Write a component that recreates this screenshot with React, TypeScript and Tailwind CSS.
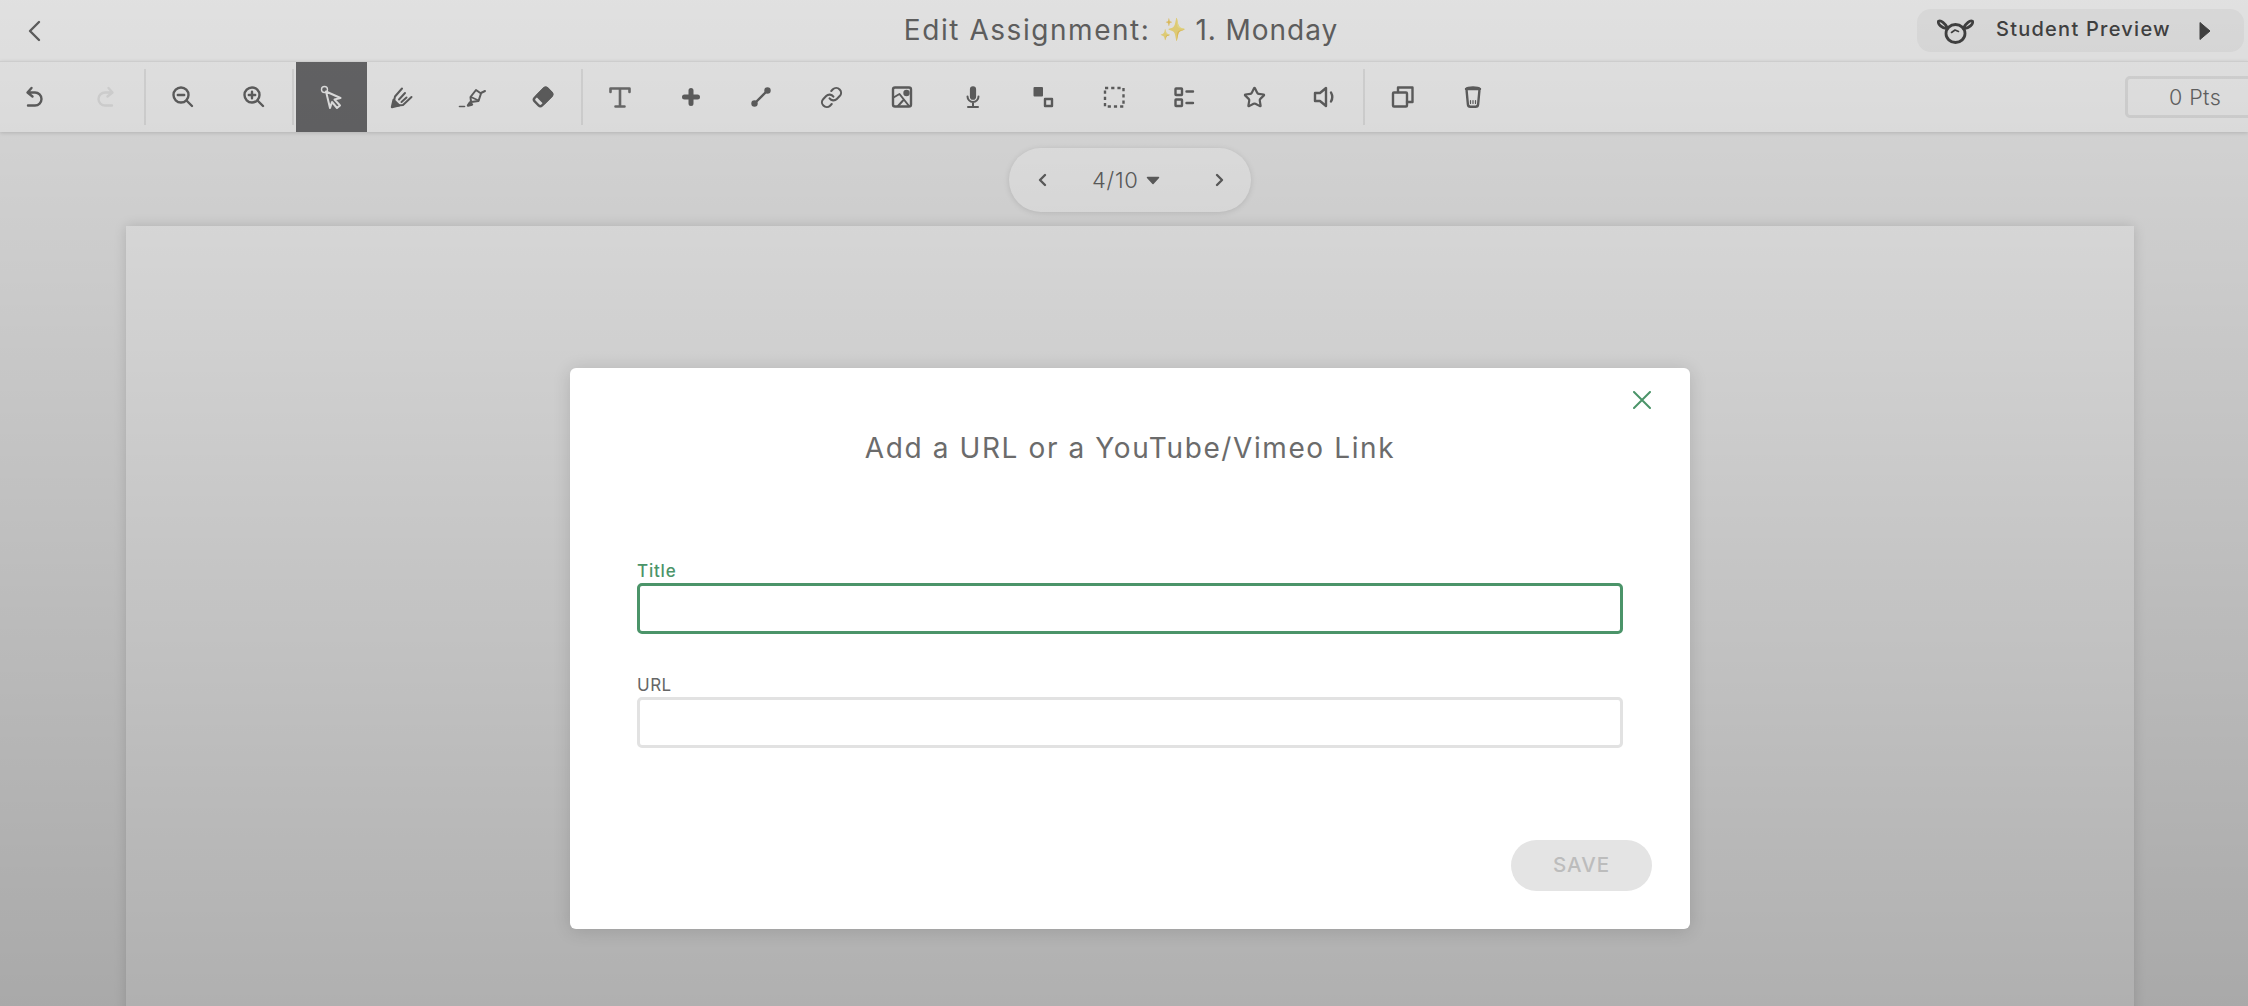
import React from 'react';
import { Link as LinkIcon, Star } from 'lucide-react';

const font = "font-['Inter','Noto_Sans',sans-serif]";

const Ico: React.FC<{ children: React.ReactNode; className?: string }> = ({ children, className = 'text-[#686868]' }) => (
  <svg width="32" height="32" viewBox="0 0 32 32" fill="none" stroke="currentColor" strokeWidth="2.4" strokeLinecap="round" strokeLinejoin="round" className={className}>
    {children}
  </svg>
);

const Tool: React.FC<{ children: React.ReactNode; active?: boolean }> = ({ children, active }) => (
  <button className={`flex h-[70px] w-[70.5px] shrink-0 items-center justify-center ${active ? 'bg-[#6f6f71]' : ''}`}>{children}</button>
);

const Divider = () => <div className="mx-[2.5px] h-[56px] w-[2px] shrink-0 bg-[#ececec]" />;

export default function App() {
  return (
    <div className={`relative h-screen w-full overflow-hidden bg-[#f5f5f5] ${font}`}>
      {/* --- HEADER --- */}
      <header className="grid h-[61px] grid-cols-[1fr_auto_1fr] items-center bg-white pr-[4px]">
        <button className="pl-[27px]">
          <svg width="14" height="22" viewBox="0 0 14 22" fill="none" stroke="#686868" strokeWidth="2.4" strokeLinecap="round" strokeLinejoin="round">
            <path d="M12 2 3 11l9 9" />
          </svg>
        </button>
        <h1 className="mb-[2px] mr-[2px] flex items-center text-[28px] font-normal text-[#6a6a6a]">
          <span className="tracking-[1.55px]">Edit Assignment:</span>
          <span className="mx-[9px] text-[22px] opacity-60">✨</span>
          <span className="tracking-[0.95px]">1. Monday</span>
        </h1>
        <div className="flex justify-end">
          <button className="flex h-[43px] w-[327px] items-center rounded-[14px] bg-[#f5f5f5] pl-[20px] text-[#484848]">
            <svg width="37" height="26" viewBox="0 0 37 26" fill="none" stroke="currentColor" strokeWidth="2.8" strokeLinecap="round" strokeLinejoin="round">
              <ellipse cx="18.5" cy="15.5" rx="9.5" ry="9" />
              <path d="M10.5 10C8 5 4 2 1.5 3.2 0.5 6 5 10.5 10 10.5" />
              <path d="M26.5 10C29 5 33 2 35.5 3.2 36.5 6 32 10.5 27 10.5" />
              <path d="M14.5 14.5 18 12l3.5 1.5" strokeWidth="1.6" />
            </svg>
            <span className="mb-[3px] ml-[22px] text-[20px] font-medium tracking-[1.25px]">Student Preview</span>
            <svg width="12" height="20" viewBox="0 0 12 20" className="ml-[28px]" fill="currentColor" stroke="currentColor" strokeWidth="1" strokeLinejoin="round">
              <path d="M1 1.5 11 10 1 18.5Z" />
            </svg>
          </button>
        </div>
      </header>

      {/* --- TOOLBAR --- */}
      <div className="relative z-10 flex h-[71px] items-center border-t-[1px] border-[#ececec] bg-white shadow-[0_1px_4px_rgba(0,0,0,0.15)]">
        <Tool>
          <Ico><path d="M12.5 7 8.5 11.5l5 4M9 11.5h7a6.5 6.5 0 0 1 0 13H9" /></Ico>
        </Tool>
        <Tool>
          <Ico className="text-[#ececec]"><path d="M18.5 7l4 4.5-5 4M22 11.5h-7a6.5 6.5 0 0 0 0 13h7" /></Ico>
        </Tool>
        <Divider />
        <Tool>
          <Ico><circle cx="14" cy="14" r="7.5" /><path d="m19.5 19.5 5.5 5.5M10.8 14h6.4" /></Ico>
        </Tool>
        <Tool>
          <Ico><circle cx="14" cy="14" r="7.5" /><path d="m19.5 19.5 5.5 5.5M10.8 14h6.4M14 10.8v6.4" /></Ico>
        </Tool>
        <Divider />
        <Tool active>
          <Ico className="text-[#fbfbfb]">
            <circle cx="9.5" cy="8.5" r="3" strokeWidth="1.4" />
            <path d="M11 10.5 25.5 17l-6 1.5 5.5 6-3 2.5-5-6-2 6Z" strokeWidth="2" />
          </Ico>
        </Tool>
        <Tool>
          <Ico>
            <path d="M7 25 9 15.5l7-8M7 25 17 24l8.5-8M13 18.5 19 12M15.5 21l5-4.5" strokeWidth="2" />
            <path d="M6 26l1.6-7 5.4 5.4Z" fill="currentColor" />
          </Ico>
        </Tool>
        <Tool>
          <Ico>
            <path d="M3.5 25.5h5" strokeWidth="1.6" />
            <path d="M12 24.5l2-3 2 2Z" fill="currentColor" />
            <path d="M15 21l-.5-5 5.5-7 5 3.5-2.5 7.5ZM25 12l4-2" strokeWidth="2" />
            <path d="M15 16l7.5 3.5" strokeWidth="1.6" />
          </Ico>
        </Tool>
        <Tool>
          <Ico>
            <g transform="rotate(-45 16 16)">
              <rect x="7" y="10.75" width="18" height="10.5" rx="2.5" fill="#fff" />
              <path d="M12.5 10.75H22.5a2.5 2.5 0 0 1 2.5 2.5v5.5a2.5 2.5 0 0 1-2.5 2.5H12.5Z" fill="currentColor" />
            </g>
          </Ico>
        </Tool>
        <Divider />
        <Tool>
          <Ico className="text-[#777]"><path d="M6.5 11V7.5h19V11M16 7.5v18M11.5 25.5h9" strokeWidth="2.6" /></Ico>
        </Tool>
        <Tool>
          <Ico><path d="M16 9.5v13M9.5 16h13" strokeWidth="5" /></Ico>
        </Tool>
        <Tool>
          <Ico>
            <path d="M9.5 22.5 22.5 9.5" />
            <circle cx="9.5" cy="22.5" r="3.2" fill="currentColor" stroke="none" />
            <circle cx="22.5" cy="9.5" r="3.2" fill="currentColor" stroke="none" />
          </Ico>
        </Tool>
        <Tool>
          <LinkIcon size={23} strokeWidth={2.2} className="text-[#686868]" />
        </Tool>
        <Tool>
          <Ico>
            <rect x="7" y="6.5" width="18" height="19" rx="2" />
            <circle cx="20.5" cy="12" r="3.2" fill="currentColor" stroke="none" />
            <path d="M7.5 16.5 13.5 13l9.5 12M12 25l5-5.5" strokeWidth="2" />
          </Ico>
        </Tool>
        <Tool>
          <Ico>
            <rect x="13.7" y="6" width="4.6" height="12" rx="2.3" fill="currentColor" strokeWidth="1.6" />
            <path d="M10.5 15.5a5.5 5.5 0 0 0 11 0M16 21v4.5M11 26h10" strokeWidth="2" />
          </Ico>
        </Tool>
        <Tool>
          <Ico>
            <rect x="6.5" y="6" width="9.5" height="9.5" rx="1" fill="currentColor" stroke="none" />
            <rect x="18" y="18" width="7" height="7" strokeWidth="2.4" />
          </Ico>
        </Tool>
        <Tool>
          <Ico><rect x="7" y="7" width="18.5" height="18.5" strokeDasharray="3.2 3" strokeLinecap="butt" /></Ico>
        </Tool>
        <Tool>
          <Ico>
            <rect x="7.5" y="7.5" width="6.5" height="6.5" rx="0.5" />
            <rect x="7.5" y="18.5" width="6.5" height="6.5" rx="0.5" />
            <path d="M18.5 10.5h6.5M18.5 22h6.5" />
          </Ico>
        </Tool>
        <Tool>
          <Star size={23} strokeWidth={2.3} className="text-[#686868]" />
        </Tool>
        <Tool>
          <Ico>
            <path d="M6 12h5l6-5v18l-6-5H6Z" />
            <path d="M22 11.5c1.6 2.8 1.6 6.2 0 9" />
          </Ico>
        </Tool>
        <Divider />
        <Tool>
          <Ico>
            <rect x="6" y="11.5" width="14" height="14" rx="1" />
            <path d="M11 11V6.5h14.5V21H20" />
          </Ico>
        </Tool>
        <Tool>
          <Ico>
            <path d="M9 8c2-2 12-2 14 0M9 8h14M9.5 8.5l1.4 15a2.5 2.5 0 0 0 2.5 2.2h5.2a2.5 2.5 0 0 0 2.5-2.2l1.4-15" />
            <path d="M13.5 19.5v3M16 19.5v3M18.5 19.5v3" strokeWidth="1.2" />
          </Ico>
        </Tool>
        <div className="ml-auto -mr-[10px] flex h-[42px] w-[133px] shrink-0 items-center rounded-[5px] border-[3px] border-[#ececec] pl-[41px] text-[21.5px] font-light tracking-[0.4px] text-[#6d6d6d]">
          0 Pts
        </div>
      </div>

      {/* --- WORKSPACE --- */}
      <main className="flex flex-col items-center pl-[12px]">
        <div className="mt-[16px] flex h-[64px] w-[242px] items-center rounded-full bg-white pl-[28px] text-[#686868] shadow-[0_1px_6px_rgba(0,0,0,0.12)]">
          <svg width="10" height="14" viewBox="0 0 10 14" fill="none" stroke="currentColor" strokeWidth="2.4" strokeLinecap="round" strokeLinejoin="round">
            <path d="M8 2 3 7l5 5" />
          </svg>
          <span className="ml-[45px] text-[22px] font-light tracking-[0.7px]">4/10</span>
          <svg width="14" height="9" viewBox="0 0 14 9" className="ml-[7px]" fill="currentColor" stroke="currentColor" strokeWidth="1.5" strokeLinejoin="round">
            <path d="M1.5 1.5h11L7 7.5Z" />
          </svg>
          <svg width="10" height="14" viewBox="0 0 10 14" className="ml-[55px]" fill="none" stroke="currentColor" strokeWidth="2.4" strokeLinecap="round" strokeLinejoin="round">
            <path d="M2 2l5 5-5 5" />
          </svg>
        </div>
        <div className="mt-[14px] h-[900px] w-[2008px] bg-white shadow-[0_0_12px_rgba(0,0,0,0.14)]" />
      </main>

      {/* --- MODAL --- */}
      <div className="absolute inset-0 z-20 flex justify-center bg-gradient-to-b from-black/[.12] to-black/[.31] pl-[12px] pt-[368px]">
        <div className="relative flex h-[561px] w-[1120px] flex-col rounded-[6px] bg-white shadow-[0_2px_18px_rgba(0,0,0,0.14)]">
          <button className="absolute right-[39px] top-[23px] text-[#4b9469]">
            <svg width="18" height="18" viewBox="0 0 18 18" fill="none" stroke="currentColor" strokeWidth="2" strokeLinecap="round">
              <path d="M1 1l16 16M17 1 1 17" />
            </svg>
          </button>
          <div className="flex flex-col px-[67px] pt-[62px]">
            <h2 className="text-center text-[28px] font-normal leading-[36px] tracking-[1.6px] text-[#6b6b6b]">Add a URL or a YouTube/Vimeo Link</h2>
            <label className="mt-[95px] text-[17px] font-medium leading-[20px] tracking-[0.8px] text-[#4b9469]">Title</label>
            <input className="mt-[2px] h-[51px] w-full rounded-[5px] border-[3px] border-[#4b9469] bg-white outline-none" />
            <label className="mt-[41px] text-[17px] leading-[20px] tracking-[0.5px] text-[#666]">URL</label>
            <input className="mt-[2px] h-[51px] w-full rounded-[5px] border-[3px] border-[#e2e2e2] bg-white outline-none" />
          </div>
          <div className="mt-auto flex justify-end pb-[38px] pr-[38px]">
            <button className="h-[51px] w-[141px] rounded-full bg-[#e4e4e4] text-[20.5px] font-medium tracking-[1px] text-[#bcbcbc]">SAVE</button>
          </div>
        </div>
      </div>
    </div>
  );
}
